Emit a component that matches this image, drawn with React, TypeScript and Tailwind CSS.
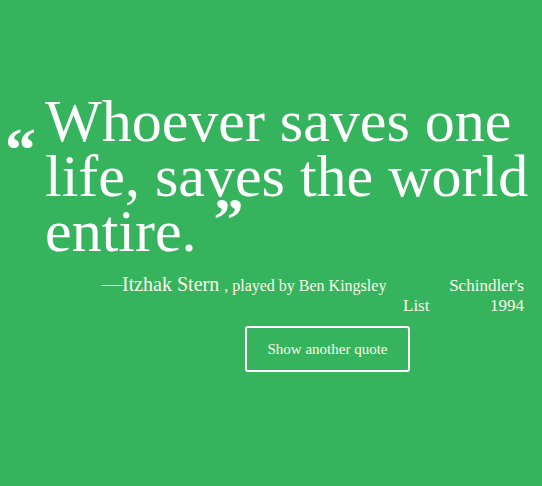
const serif = { fontFamily: '"Liberation Serif", "Times New Roman", serif' }

export default function App() {
  return (
    <div
      className="min-h-[486px] w-full bg-[#36b45d] pt-[94px] text-white"
      style={serif}
    >
      {/* cita */}
      <div className="flex">
        <div className="w-[45px] shrink-0 pl-[5px] pt-[24px]">
          <span className="block text-[62px] font-bold leading-none">&ldquo;</span>
        </div>
        <p className="min-w-0 flex-1 text-[60px] leading-[55px]">
          Whoever saves one life, saves the world entire.
          <span className="relative -top-[12px] ml-[17px] font-bold text-[60px]">&rdquo;</span>
        </p>
      </div>

      {/* autor + pelicula */}
      <div className="mt-[13px] flex items-baseline justify-between pl-[102px] pr-[18px] text-[#fcfbe9]">
        <p className="text-[20px] leading-6">
          &mdash;Itzhak Stern <span className="text-[16px]">, played by Ben Kingsley</span>
        </p>
        <div className="w-[121px] text-[17px] leading-5">
          <p className="text-right">Schindler's</p>
          <p className="flex justify-between">
            <span>List</span>
            <span>1994</span>
          </p>
        </div>
      </div>

      <div className="mt-[10px] pl-[245px]">
        <button className="flex h-[46px] w-[165px] items-center justify-center rounded-[3px] border-2 border-white text-[15px] text-[#fcfbe9]">
          Show another quote
        </button>
      </div>
    </div>
  )
}
